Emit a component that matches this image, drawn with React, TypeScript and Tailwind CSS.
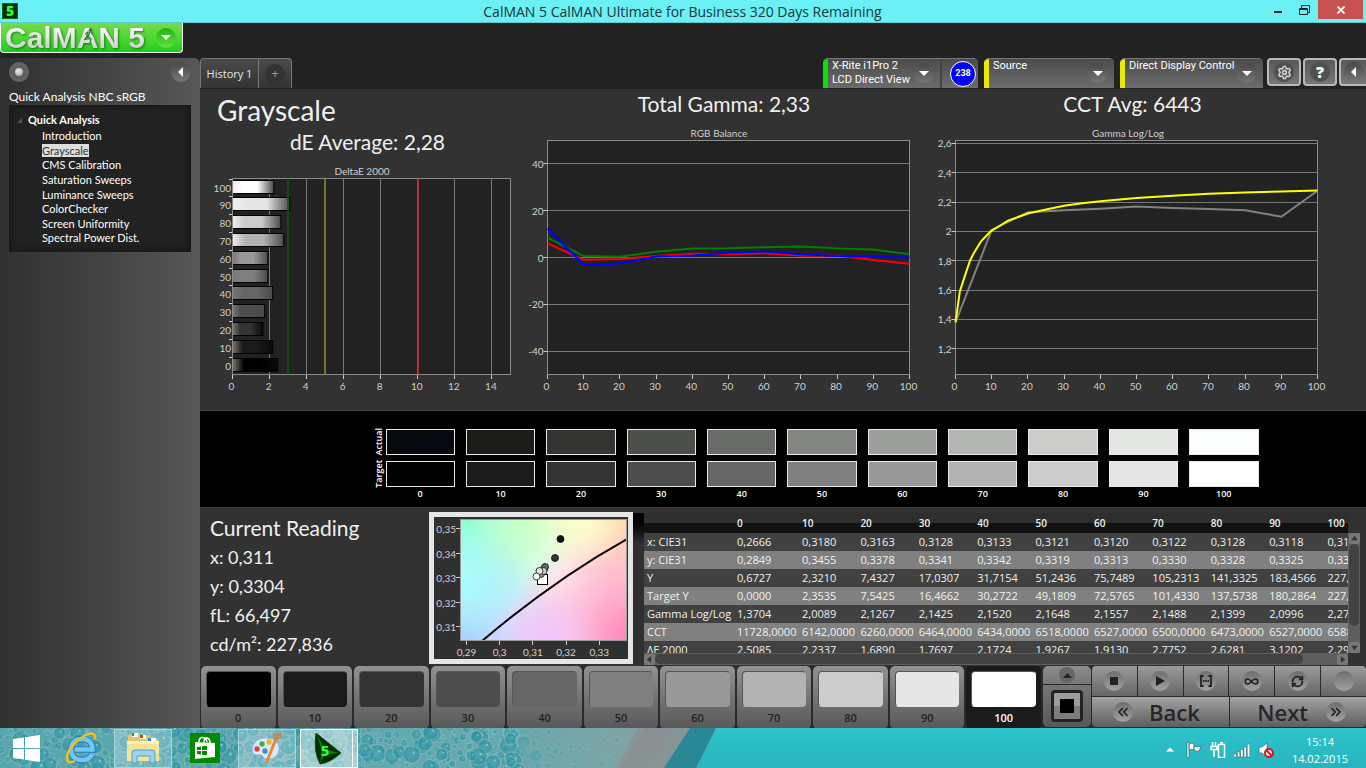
import React from 'react';
import { ChevronsLeft, ChevronsRight, Infinity as InfinityIcon, RefreshCw, Settings } from 'lucide-react';

const LEVELS = [0, 10, 20, 30, 40, 50, 60, 70, 80, 90, 100];

const TREE_ITEMS = [
  'Introduction',
  'Grayscale',
  'CMS Calibration',
  'Saturation Sweeps',
  'Luminance Sweeps',
  'ColorChecker',
  'Screen Uniformity',
  'Spectral Power Dist.',
];

const ACTUAL = ['#060a0e', '#1b1b18', '#333331', '#4d4f4b', '#6a6c69', '#838581', '#9c9e9b', '#b4b6b3', '#cdcecc', '#e4e6e3', '#fcfffe'];
const TARGET = ['#000000', '#1a1a1a', '#333333', '#4d4d4d', '#666666', '#808080', '#999999', '#b3b3b3', '#cccccc', '#e6e6e6', '#ffffff'];

const DELTA_E = [2.44, 2.17, 1.64, 1.74, 2.17, 1.91, 1.91, 2.77, 2.61, 3.09, 2.23];

const BALANCE = [
  { color: '#008000', values: [8.5, 0.6, 0.3, 2.5, 3.8, 3.9, 4.4, 4.7, 3.9, 3.4, 1.4] },
  { color: '#ff0000', values: [6, -1, -0.6, 0.6, 1.6, 1.5, 1.8, 0.9, 0.8, -1.1, -2.7] },
  { color: '#0000ff', values: [12.3, -3, -2.6, 0.4, 0.9, 2, 2.6, 1.4, 0.6, 0.2, 0] },
];

const GAMMA_ACTUAL = [1.38, 2.01, 2.13, 2.145, 2.155, 2.17, 2.16, 2.153, 2.145, 2.1, 2.277];
const GAMMA_TARGET = [
  [0, 1.38], [1.2, 1.59], [2.5, 1.69], [4, 1.8], [5, 1.85], [7, 1.93], [9.7, 2], [12, 2.035], [14.5, 2.073], [17.5, 2.1],
  [20, 2.122], [25, 2.15], [30, 2.175], [35, 2.192], [40, 2.206], [50, 2.228], [60, 2.243], [70, 2.256], [80, 2.265], [90, 2.272], [100, 2.279],
];

const ROWS = [
  ['x: CIE31', '0,2666', '0,3180', '0,3163', '0,3128', '0,3133', '0,3121', '0,3120', '0,3122', '0,3128', '0,3118', '0,3112'],
  ['y: CIE31', '0,2849', '0,3455', '0,3378', '0,3341', '0,3342', '0,3319', '0,3313', '0,3330', '0,3328', '0,3325', '0,3304'],
  ['Y', '0,6727', '2,3210', '7,4327', '17,0307', '31,7154', '51,2436', '75,7489', '105,2313', '141,3325', '183,4566', '227,8360'],
  ['Target Y', '0,0000', '2,3535', '7,5425', '16,4662', '30,2722', '49,1809', '72,5765', '101,4330', '137,5738', '180,2864', '227,8360'],
  ['Gamma Log/Log', '1,3704', '2,0089', '2,1267', '2,1425', '2,1520', '2,1648', '2,1557', '2,1488', '2,1399', '2,0996', '2,2740'],
  ['CCT', '11728,0000', '6142,0000', '6260,0000', '6464,0000', '6434,0000', '6518,0000', '6527,0000', '6500,0000', '6473,0000', '6527,0000', '6588,0000'],
  ['ΔE 2000', '2,5085', '2,2337', '1,6890', '1,7697', '2,1724', '1,9267', '1,9130', '2,7752', '2,6281', '3,1202', '2,2900'],
];

const axisText = "fill-[#d0d0d0] font-['Lato',sans-serif] text-[10px]";

const RoundArrow = ({ dir = 'down' }: { dir?: 'down' | 'left' }) => (
  <span className="flex size-5 shrink-0 items-center justify-center rounded-full bg-gradient-to-b from-[#484848] to-[#777]">
    <svg width="10" height="10" viewBox="0 0 10 10" fill="#fff" aria-hidden="true">
      {dir === 'down' ? <path d="M0 3h10L5 8z" /> : <path d="M7 0v10L2 5z" />}
    </svg>
  </span>
);

const TitleBar = () => (
  <header className="flex h-[23px] items-start border-b border-[#5cc9cd] bg-[#6bf0f5] font-['Open_Sans',sans-serif]">
    <span className="ml-[2px] mt-[3px] flex size-4 items-center justify-center border border-[#0c6b0c] bg-[#052a05] text-[14px] font-extrabold leading-4 text-[#2fff2f]">
      5
    </span>
    <h1 className="flex-1 pl-[82px] text-center text-[14px] leading-[23px] text-[#17363a]">
      CalMAN 5 CalMAN Ultimate for Business 320 Days Remaining
    </h1>
    <button type="button" aria-label="Minimize" className="flex h-5 w-[26px] items-center justify-center">
      <span className="mt-1 h-[2px] w-2 bg-[#17262a]" />
    </button>
    <button type="button" aria-label="Restore" className="flex h-5 w-[26px] items-center justify-center">
      <svg width="11" height="11" viewBox="0 0 11 11" fill="none" stroke="#17262a">
        <path d="M.5 3.5h8v6h-8zM.5 4.5h8M2.5 3V.5h8v7H9" />
      </svg>
    </button>
    <button type="button" aria-label="Close" className="ml-px mr-[3px] flex h-[19px] w-[45px] items-center justify-center bg-[#c75050]">
      <svg width="8" height="8" viewBox="0 0 8 8" stroke="#fff" strokeWidth="1.7">
        <path d="M.5.5l7 7M7.5.5l-7 7" />
      </svg>
    </button>
  </header>
);

const Logo = () => (
  <div className="h-[35px] bg-[#222]">
    <button
      type="button"
      className="relative flex h-[30px] w-[183px] items-center justify-between rounded-b-[4px] border border-t-0 border-white bg-gradient-to-b from-[#73dc4c] to-[#0bd013] pl-1 pr-[6px]"
    >
      <span className="bg-gradient-to-b from-white to-[#c9c9c9] bg-clip-text font-['Liberation_Sans',sans-serif] text-[30px] font-bold leading-[26px] text-transparent drop-shadow-[1px_1px_1px_rgba(0,60,0,0.6)]">
        CalMAN 5
      </span>
      <svg width="12" height="16" viewBox="0 0 12 16" fill="none" stroke="#2a7a2c" strokeWidth="1.2" className="absolute left-[82px] top-[5px]" aria-hidden="true">
        <circle cx="7.500" cy="2" r="1.200" fill="#2a7a2c" />
        <path d="M6.500 4.500L5 9l3 2-1 4M5 9l-4 3M2 6l3-2h3l2 3" />
      </svg>
      <span className="flex size-5 items-center justify-center rounded-full bg-gradient-to-b from-[#12b416] to-[#61e33c]">
        <svg width="10" height="6" viewBox="0 0 10 6" fill="#fff" aria-hidden="true">
          <path d="M0 0h10L5 5z" />
        </svg>
      </span>
    </button>
  </div>
);

const Sidebar = () => (
  <aside className="w-[200px] shrink-0 rounded-tr-[6px] bg-gradient-to-r from-[#303030] to-[#575757] px-[9px] font-['Lato',sans-serif] text-white">
    <div className="flex items-center justify-between pt-1">
      <button type="button" aria-label="Record" className="flex size-5 items-center justify-center rounded-full bg-[radial-gradient(circle,#555,#6e6e6e)]">
        <span className="size-2 rounded-full bg-[radial-gradient(circle_at_40%_35%,#eee,#999)]" />
      </button>
      <button type="button" aria-label="Collapse" className="rounded-full">
        <RoundArrow dir="left" />
      </button>
    </div>
    <h2 className="mt-2 pb-px text-[12px] leading-[14px]">Quick Analysis NBC sRGB</h2>
    <nav className="h-[147px] border border-[#1a1a1a] bg-[#222] pt-[6px] shadow-[inset_0_0_6px_#111]">
      <div className="flex h-[17px] items-center gap-[6px] pl-[7px] text-[11px] font-bold">
        <svg width="5" height="5" viewBox="0 0 5 5" fill="#555" aria-hidden="true">
          <path d="M5 0v5H0z" />
        </svg>
        Quick Analysis
      </div>
      <ul className="grid h-[117px] auto-rows-fr pl-8 text-[11px] leading-[13px]">
        {TREE_ITEMS.map((item) => (
          <li key={item}>
            <a href="#" className={item === 'Grayscale' ? 'bg-[#dedede] text-[#333]' : ''}>
              {item}
            </a>
          </li>
        ))}
      </ul>
    </nav>
  </aside>
);

const Meter = ({ lines, width, bar, badge }: { lines: string[]; width: string; bar: string; badge?: string }) => (
  <div className={`${width} flex h-[30px] overflow-hidden rounded-t-[5px] border-t border-[#777] bg-gradient-to-b from-[#4c4c4c] to-[#6c6c6c]`}>
    <span className={`${bar} w-[5px] shrink-0`} />
    <button type="button" className="flex flex-1 justify-between whitespace-nowrap pl-1 pr-[6px] text-left">
      <span className="relative z-10 text-[11px] leading-[14px]">
        {lines.map((line) => (
          <span key={line} className="block">
            {line}
          </span>
        ))}
      </span>
      <span className="-ml-2 mt-1">
        <RoundArrow />
      </span>
    </button>
    {badge && (
      <span className="flex items-center border-l-2 border-[#444] pl-2 pr-[2px]">
        <span className="flex size-[26px] items-center justify-center rounded-full border border-white bg-[#0000ff] text-[9px] font-bold">{badge}</span>
      </span>
    )}
  </div>
);

const squareButton = 'flex h-7 items-center justify-center border-2 border-[#b9b9b9] bg-gradient-to-b from-[#585858] to-[#777]';

const TopRow = () => (
  <div className="flex h-[31px] items-start border-b border-[#222] bg-[#222] font-['Open_Sans',sans-serif] text-white">
    <div className="flex h-[30px] rounded-t-[4px] border border-b-0 border-[#777] bg-gradient-to-b from-[#4b4b4b] to-[#333] text-[11px] text-[#e6e6e6]">
      <button type="button" className="w-[58px] border-r border-[#777] pt-px">
        History 1
      </button>
      <button type="button" aria-label="Add tab" className="flex w-8 items-center justify-center">
        <span className="flex size-5 items-center justify-center rounded-full bg-[#333] text-[13px] text-[#999]">+</span>
      </button>
    </div>
    <div className="ml-auto flex gap-[6px] font-['Roboto',sans-serif]">
      <Meter width="w-[155px]" lines={['X-Rite i1Pro 2', 'LCD Direct View']} bar="bg-[#00e600]" badge="238" />
      <Meter width="w-[130px]" lines={['Source']} bar="bg-[#eaea00]" />
      <Meter width="w-[143px]" lines={['Direct Display Control']} bar="bg-[#eaea00]" />
    </div>
    <div className="ml-1 flex gap-[2px]">
      <button type="button" aria-label="Settings" className={`${squareButton} w-[34px] rounded-[4px]`}>
        <span className="flex size-5 items-center justify-center rounded-full bg-[#505050]">
          <Settings size={15} color="#d0d0d0" strokeWidth={2.5} />
        </span>
      </button>
      <button type="button" aria-label="Help" className={`${squareButton} w-[34px] rounded-[4px]`}>
        <span className="flex size-5 items-center justify-center rounded-full bg-[#505050] text-[16px] font-extrabold leading-5">?</span>
      </button>
      <button type="button" aria-label="Collapse panel" className={`${squareButton} w-[27px] rounded-l-[4px] border-r-0`}>
        <RoundArrow dir="left" />
      </button>
    </div>
  </div>
);

const DeltaEChart = () => {
  const left = 32.5;
  const top = 23.5;
  const unit = 18.53;
  const step = 196 / 11;
  return (
    <svg viewBox="0 0 321 241" className="block w-full" role="img" aria-label="DeltaE 2000">
      <defs>
        {TARGET.map((color, i) => (
          <linearGradient key={color} id={`bar${i}`}>
            <stop offset="0" stopColor={i < 7 ? '#777' : '#eee'} />
            <stop offset="0.25" stopColor={color} />
            <stop offset="0.6" stopColor={color} />
            <stop offset="1" stopColor={i > 2 ? '#4a4a4a' : '#0a0a0a'} />
          </linearGradient>
        ))}
      </defs>
      <text x="162" y="20" textAnchor="middle" className={axisText}>DeltaE 2000</text>
      <rect x={left} y={top} width="278" height="196" fill="#222" stroke="#8a8a8a" />
      {[2, 4, 6, 8, 10, 12, 14].map((v) => (
        <path key={v} d={`M${Math.floor(left + v * unit) + 0.5} ${top}v196`} stroke="#777" />
      ))}
      {DELTA_E.map((v, i) => {
        const y = Math.floor(top + (10 - i) * step + 1.5);
        return (
          <g key={i}>
            <rect x={left} y={y + 0.5} width={v * unit} height="13" fill={`url(#bar${i})`} stroke="#000" />
            <text x="31" y={y + 12} textAnchor="end" className={axisText}>{LEVELS[i]}</text>
            <path d={`M29 ${Math.round(top + i * step) + 0.5}h3`} stroke="#ccc" />
          </g>
        );
      })}
      <path d={`M${left} ${top}v196`} stroke="#8a8a8a" />
      <path d={`M88 ${top}v196`} stroke="#0f5a0f" strokeWidth="1.5" />
      <path d={`M125 ${top}v196`} stroke="#8e8a18" strokeWidth="1.6" />
      <path d={`M218 ${top}v196`} stroke="#d22a30" strokeWidth="1.6" />
      {[0, 2, 4, 6, 8, 10, 12, 14].map((v) => (
        <g key={v}>
          <path d={`M${Math.floor(left + v * unit) + 0.5} 220v4`} stroke="#ccc" />
          <text x={left + v * unit - 1} y="235" textAnchor="middle" className={axisText}>{v}</text>
        </g>
      ))}
    </svg>
  );
};

type LineChartProps = {
  width: number;
  left: number;
  title: string;
  titleX: number;
  min: number;
  max: number;
  ticks: number[];
  children: (x: (v: number) => number, y: (v: number) => number) => React.ReactNode;
};

const LineChart = ({ width, left, title, titleX, min, max, ticks, children }: LineChartProps) => {
  const top = 21.5;
  const x = (v: number) => left + v * 3.62;
  const y = (v: number) => top + ((max - v) / (max - min)) * 234;
  return (
    <svg viewBox={`0 0 ${width} 277`} className="block w-full" role="img" aria-label={title}>
      <text x={titleX} y="18" textAnchor="middle" className={axisText}>{title}</text>
      <rect x={left} y={top} width="362" height="234" fill="#222" stroke="#8a8a8a" />
      {ticks.map((t) => (
        <g key={t}>
          <path d={`M${left} ${Math.floor(y(t)) + 0.5}h362`} stroke="#777" />
          <path d={`M${left - 4} ${Math.floor(y(t)) + 0.5}h4`} stroke="#ccc" />
          <text x={left - 4} y={y(t) + 4} textAnchor="end" className={axisText}>{String(t).replace('.', ',')}</text>
        </g>
      ))}
      {LEVELS.map((v) => (
        <g key={v}>
          <path d={`M${Math.floor(x(v)) + 0.5} 256v4`} stroke="#ccc" />
          <text x={x(v) - 1} y="271" textAnchor="middle" className={axisText}>{v}</text>
        </g>
      ))}
      {children(x, y)}
    </svg>
  );
};

const bigReading = 'text-center text-[21px] text-[#f0f0f0]';

const Charts = () => (
  <section className="grid grid-cols-[321fr_410fr_435fr] bg-[#323232] pb-[14px] font-['Lato',sans-serif]">
    <div>
      <h2 className="pl-[17px] text-[28px] leading-[42px] text-[#f0f0f0]">Grayscale</h2>
      <p className={`${bigReading} pb-[2px] pl-[14px] leading-[22px]`}>dE Average: 2,28</p>
      <DeltaEChart />
    </div>
    <div>
      <p className={`${bigReading} pr-1 leading-[30px]`}>Total Gamma: 2,33</p>
      <LineChart width={410} left={26.5} title="RGB Balance" titleX={198} min={-50} max={50} ticks={[40, 20, 0, -20, -40]}>
        {(x, y) =>
          BALANCE.map((line) => (
            <polyline
              key={line.color}
              fill="none"
              stroke={line.color}
              strokeWidth="2"
              points={line.values.map((v, i) => `${x(LEVELS[i])},${y(v)}`).join(' ')}
            />
          ))
        }
      </LineChart>
    </div>
    <div>
      <p className={`${bigReading} pr-8 leading-[30px]`}>CCT Avg: 6443</p>
      <LineChart width={435} left={24.5} title="Gamma Log/Log" titleX={197} min={1.024} max={2.62} ticks={[2.6, 2.4, 2.2, 2, 1.8, 1.6, 1.4, 1.2]}>
        {(x, y) => (
          <>
            <polyline fill="none" stroke="#828282" strokeWidth="2" points={GAMMA_ACTUAL.map((v, i) => `${x(LEVELS[i])},${y(v)}`).join(' ')} />
            <polyline fill="none" stroke="#ffff00" strokeWidth="2" points={GAMMA_TARGET.map(([a, v]) => `${x(a)},${y(v)}`).join(' ')} />
          </>
        )}
      </LineChart>
    </div>
  </section>
);

const SwatchRow = ({ label, colors }: { label: string; colors: string[] }) => (
  <>
    <span className="-mr-[18px] flex items-center justify-center">
      <span className="-rotate-90">{label}</span>
    </span>
    {colors.map((color) => (
      <span key={color} className="border border-[#e8e8e8]" style={{ backgroundColor: color }} />
    ))}
  </>
);

const Swatches = () => (
  <section className="flex h-[97px] justify-center border-t border-[#444] bg-black pt-[18px] pl-[58px] font-['Open_Sans',sans-serif] text-[9px] font-semibold text-white">
    <div className="grid w-[893px] grid-cols-[9px_repeat(11,1fr)] grid-rows-[26px_26px_13px] gap-x-[11px] gap-y-[6px]">
      <SwatchRow label="Actual" colors={ACTUAL} />
      <SwatchRow label="Target" colors={TARGET} />
      <span />
      {LEVELS.map((v) => (
        <span key={v} className="-mt-[6px] text-center leading-[13px]">
          {v}
        </span>
      ))}
    </div>
  </section>
);

const CIE_POINTS = [
  { x: 131.5, y: 27, color: '#111' },
  { x: 126, y: 46, color: '#333' },
  { x: 115, y: 57, color: '#4d4d4d' },
  { x: 116, y: 55, color: '#666' },
  { x: 112, y: 62, color: '#999' },
  { x: 114.5, y: 59, color: '#ccc' },
  { x: 110.5, y: 59, color: '#e6e6e6' },
  { x: 107.5, y: 64.5, color: '#fff' },
];

const CIE_GLOWS = [
  { id: 'g1', x: 31, y: 7, r: 120, color: '#7fffc4' },
  { id: 'g2', x: 31, y: 128, r: 110, color: '#a4c4ff' },
  { id: 'g3', x: 198, y: 7, r: 80, color: '#ffdca8' },
  { id: 'g4', x: 205, y: 128, r: 125, color: '#ff80b4' },
  { id: 'g5', x: 31, y: 68, r: 75, color: '#a8ffff' },
  { id: 'g6', x: 100, y: 7, r: 60, color: '#ccffc4' },
  { id: 'g8', x: 150, y: 7, r: 50, color: '#fbffc8' },
  { id: 'g7', x: 115, y: 132, r: 60, color: '#f0c4ff' },
];

const CieChart = () => (
  <div className="w-[204px] shrink-0 border-[5px] border-[#e6e6e6] bg-[#303030]">
    <svg viewBox="5 5 194 142" className="block w-full" role="img" aria-label="CIE chart">
      <defs>
        {CIE_GLOWS.map((g) => (
          <radialGradient key={g.id} id={g.id}>
            <stop offset="0" stopColor={g.color} />
            <stop offset="1" stopColor={g.color} stopOpacity="0" />
          </radialGradient>
        ))}
        <clipPath id="ciePlot">
          <rect x="31" y="7" width="167" height="122" />
        </clipPath>
      </defs>
      <g clipPath="url(#ciePlot)">
        <rect x="31" y="7" width="167" height="122" fill="#fffdfa" />
        {CIE_GLOWS.map((g) => (
          <circle key={g.id} cx={g.x} cy={g.y} r={g.r} fill={`url(#${g.id})`} />
        ))}
        <path d="M53 129Q126 67 198 27" fill="none" stroke="#000" strokeWidth="2" />
      </g>
      <rect x="31.5" y="7.5" width="166" height="121" fill="none" stroke="#999" />
      <rect x="108.5" y="62.5" width="10" height="10" fill="#fff" stroke="#000" />
      {CIE_POINTS.map((p) => (
        <circle key={p.color} cx={p.x} cy={p.y} r="3.5" fill={p.color} stroke="#111" strokeWidth="0.8" />
      ))}
      {[0.35, 0.34, 0.33, 0.32, 0.31].map((v, i) => (
        <g key={v}>
          <path d={`M27 ${Math.floor(16.5 + i * 24.5) + 0.5}h4`} stroke="#ccc" />
          <text x="27" y={21 + i * 24.5} textAnchor="end" className={axisText}>{String(v).replace('.', ',')}</text>
        </g>
      ))}
      {[0.29, 0.3, 0.31, 0.32, 0.33].map((v, i) => (
        <g key={v}>
          <path d={`M${Math.floor(37.5 + i * 33.2) + 0.5} 129v4`} stroke="#ccc" />
          <text x={37.5 + i * 33.2} y="144" textAnchor="middle" className={axisText}>{String(v).replace('.', ',')}</text>
        </g>
      ))}
    </svg>
  </div>
);

const Arrow = ({ d }: { d: string }) => (
  <svg width="11" height="11" viewBox="0 0 10 10" aria-hidden="true" className="shrink-0 rounded-[2px] bg-[#777]">
    <path d={d} fill="#333" />
  </svg>
);

const DataGrid = () => (
  <div className="flex min-w-0 flex-1 pt-px font-['Open_Sans',sans-serif]">
    <div className="w-[11px] shrink-0 bg-gradient-to-b from-black to-[#303030] to-20%" />
    <div className="min-w-0 flex-1">
      <div className="h-[140px] overflow-hidden">
        <table className="w-[742px] table-fixed text-left text-[11px] text-[#f0f0f0]">
          <colgroup>
            <col className="w-[93px]" />
            <col className="w-[65px]" />
          </colgroup>
          <thead>
            <tr className="h-5 bg-gradient-to-b from-[#2e2e2e] from-50% to-[#111] to-50%">
              <th scope="col" />
              {LEVELS.map((v) => (
                <th key={v} scope="col" className="p-0 text-[10px] font-semibold">
                  {v}
                </th>
              ))}
            </tr>
          </thead>
          <tbody>
            {ROWS.map(([name, ...values]) => (
              <tr key={name} className="h-[18px] bg-[#414141] leading-[18px] even:bg-[#808080]">
                <th scope="row" className="whitespace-nowrap p-0 pl-[3px] font-normal">
                  {name}
                </th>
                {values.map((v, i) => (
                  <td key={i} className="p-0">
                    {v}
                  </td>
                ))}
              </tr>
            ))}
          </tbody>
        </table>
      </div>
      <div className="flex h-3 items-center bg-[#5e5e5e]">
        <Arrow d="M6.500 2v6l-4-3z" />
        <span className="h-[10px] w-[92%] rounded-full bg-[#424242]" />
        <span className="ml-auto flex">
          <Arrow d="M3.500 2v6l4-3z" />
        </span>
      </div>
    </div>
    <div className="mb-[13px] mr-[6px] mt-5 flex w-3 shrink-0 flex-col items-center bg-[#5e5e5e]">
      <Arrow d="M2 6.500h6l-3-4z" />
      <span className="h-[82px] w-[10px] rounded-full bg-[#424242]" />
      <span className="mt-auto flex">
        <Arrow d="M2 3.500h6l-3 4z" />
      </span>
    </div>
  </div>
);

const Readings = () => (
  <section className="flex h-[159px] border-t border-[#3c3c3c] bg-[#323232] pt-1">
    <div className="min-w-[229px] pl-[10px] font-['Lato',sans-serif] text-[18px] leading-[29px] text-[#f0f0f0]">
      <h2 className="text-[21px] leading-[31px]">Current Reading</h2>
      <p>x: 0,311</p>
      <p>y: 0,3304</p>
      <p>fL: 66,497</p>
      <p>cd/m²: 227,836</p>
    </div>
    <div className="pb-[1px]">
      <CieChart />
    </div>
    <DataGrid />
  </section>
);

const iconButton = 'flex flex-1 items-center justify-center bg-gradient-to-b from-[#9b9b9b] to-[#666]';
const iconDisc = 'flex size-5 items-center justify-center rounded-full bg-gradient-to-b from-[#6e6e6e] to-[#a2a2a2] text-[#222]';
const navButton = 'flex flex-1 items-center bg-gradient-to-b from-[#a4a4a4] to-[#5e5e5e] text-[22px] font-semibold leading-[30px] text-[#262626]';

const Controls = () => (
  <section className="flex h-[62px] bg-[#2a2a2a] pb-px font-['Open_Sans',sans-serif]">
    <div className="grid flex-1 grid-cols-11 gap-[2px] pl-px">
      {LEVELS.map((v, i) => (
        <button
          key={v}
          type="button"
          className={`flex flex-col rounded-[5px] px-[5px] pt-[5px] text-[11px] font-semibold leading-[22px] ${
            v === 100 ? 'bg-[#1b1b1b] text-white' : 'bg-gradient-to-b from-[#929292] to-[#585858] text-[#222]'
          }`}
        >
          <span className="h-9 w-full rounded-[4px] border border-t-[#555] border-l-[#555] border-r-transparent border-b-transparent" style={{ backgroundColor: TARGET[i] }} />
          <span className="w-full text-center">{v}</span>
        </button>
      ))}
    </div>
    <div className="ml-[2px] flex w-12 flex-col gap-px">
      <button type="button" aria-label="Expand" className="flex h-[18px] items-center justify-center rounded-t-[5px] bg-gradient-to-b from-[#8c8c8c] to-[#777]">
        <span className="flex size-4 items-center justify-center rounded-full bg-[#666]">
          <svg width="9" height="5" viewBox="0 0 9 5" fill="#222" aria-hidden="true">
            <path d="M0 5h9L4.500 0z" />
          </svg>
        </span>
      </button>
      <div className="flex flex-1 items-center justify-center rounded-b-[5px] bg-gradient-to-b from-[#757575] to-[#585858]">
        <button type="button" aria-label="Stop" className="flex size-8 items-center justify-center rounded-[4px] border-[3px] border-[#222] bg-gradient-to-b from-[#9c9c9c] from-50% to-[#7d7d7d] to-50%">
          <span className="size-[14px] bg-black" />
        </button>
      </div>
    </div>
    <div className="ml-px flex w-[274px] flex-col gap-px">
      <div className="flex h-[30px] gap-px overflow-hidden rounded-t-[4px]">
        <button type="button" aria-label="Stop reading" className={iconButton}>
          <span className={iconDisc}><span className="size-2 bg-[#222]" /></span>
        </button>
        <button type="button" aria-label="Play" className={iconButton}>
          <span className={iconDisc}>
            <svg width="10" height="10" viewBox="0 0 10 10" fill="#222"><path d="M1 0l9 5-9 5z" /></svg>
          </span>
        </button>
        <button type="button" aria-label="Read series" className={iconButton}>
          <span className={iconDisc}>
            <svg width="12" height="12" viewBox="0 0 12 12" fill="none" stroke="#222" strokeWidth="1.8">
              <path d="M3.500 1H1v10h2.500M8.500 1H11v10H8.500" />
              <path d="M3 6h1.500M5.300 6h1.500M7.600 6h1.500" />
            </svg>
          </span>
        </button>
        <button type="button" aria-label="Read continuously" className={iconButton}>
          <span className={iconDisc}><InfinityIcon size={15} strokeWidth={2.5} /></span>
        </button>
        <button type="button" aria-label="Refresh" className={iconButton}>
          <span className={iconDisc}><RefreshCw size={13} strokeWidth={3.5} /></span>
        </button>
        <button type="button" aria-label="Empty" className={iconButton}>
          <span className={iconDisc} />
        </button>
      </div>
      <div className="flex h-[30px] gap-px overflow-hidden rounded-b-[4px]">
        <button type="button" className={`${navButton} gap-4 pl-[21px]`}>
          <span className={iconDisc}><ChevronsLeft size={16} strokeWidth={2.5} /></span>
          Back
        </button>
        <button type="button" className={`${navButton} justify-end gap-[18px] pr-5`}>
          Next
          <span className={iconDisc}><ChevronsRight size={16} strokeWidth={2.5} /></span>
        </button>
      </div>
    </div>
  </section>
);

// Pseudo-random bubbles for the wallpaper showing through the taskbar
const noise = (n: number) => {
  const v = Math.sin(n * 12.9898) * 43758.5453;
  return v - Math.floor(v);
};

const BUBBLES = Array.from({ length: 700 }, (_, i) => ({
  x: noise(i + 1) * 620,
  y: noise(i + 1500) * 42,
  r: i < 560 ? 1 + noise(i + 2900) * 3 : 5 + noise(i + 2900) * 4,
})).filter((b) => b.x < 540 || b.r < 3);

const Wallpaper = () => (
  <svg className="absolute left-0 top-0 h-10 w-[720px]" viewBox="0 0 720 40" aria-hidden="true">
    <defs>
      <linearGradient id="foam">
        <stop offset="0" stopColor="#57a6ae" />
        <stop offset="0.7" stopColor="#66a8ae" />
        <stop offset="0.86" stopColor="#7ea5a6" />
        <stop offset="1" stopColor="#7d9a9c" />
      </linearGradient>
      <radialGradient id="bubble">
        <stop offset="0" stopColor="#3aa3b1" />
        <stop offset="1" stopColor="#268b9b" />
      </radialGradient>
    </defs>
    <path d="M0 0H716L696 40H0z" fill="url(#foam)" />
    {BUBBLES.map((b, i) => (
      <g key={i} opacity={b.x > 520 ? 0.25 : 0.55}>
        <circle cx={b.x} cy={b.y} r={b.r} fill="url(#bubble)" stroke="#86b9bd" strokeWidth="1.2" />
        <circle cx={b.x + b.r / 4} cy={b.y - b.r / 4} r={b.r / 7} fill="#a9dde0" />
      </g>
    ))}
    <path d="M642 0L618 40h46L690 0z" fill="#869496" />
    <path d="M640 0l-24 40M648 0l-24 40M656 0l-24 40M666 0l-24 40" stroke="#9c8584" strokeWidth="2" opacity="0.6" />
    <path d="M690 0L664 40h32L716 0z" fill="#2a8795" />
  </svg>
);

const taskCell = 'flex h-[39px] w-[58px] items-center justify-center';

const Taskbar = () => (
  <footer className="relative flex h-10 items-center bg-gradient-to-b from-[#2cc3cb] to-[#29b4bf] font-['Open_Sans',sans-serif] text-white">
    <Wallpaper />
    <div className="relative flex items-center">
      <button type="button" aria-label="Start" className="flex w-[52px] justify-center">
        <svg width="27" height="27" viewBox="0 0 27 27" fill="#fff">
          <path d="M0 4l11-1.600V13H0zM12 2.200L27 0v13H12zM0 14h11v10.600L0 23zM12 14h15v13l-15-2.200z" />
        </svg>
      </button>
      <button type="button" aria-label="Internet Explorer" className={taskCell}>
        <svg width="34" height="34" viewBox="0 0 34 34" fill="none">
          <path d="M28 23.500C26 28 22 29 18 29C11 29 7 25 7 18.500S11 8 18 8c7 0 10.500 4 10.500 10.500H11" stroke="#2a78c0" strokeWidth="6.500" />
          <path d="M28 23.500C26 28 22 29 18 29C11 29 7 25 7 18.500S11 8 18 8c7 0 10.500 4 10.500 10.500H11" stroke="#6cc8f4" strokeWidth="4.500" />
          <path d="M31 8C32 2 27 1 20 5C11 10 3 20 3 27c0 5 4 5 8 3" stroke="#f2bf1c" strokeWidth="2.500" />
        </svg>
      </button>
      <button type="button" aria-label="File Explorer" className={`${taskCell} ml-1 border border-[#a5d8dc] bg-white/25`}>
        <svg width="34" height="32" viewBox="0 0 34 32">
          <path d="M2 5l2-3h9l2 2h9l1 3h7v20H2z" fill="#e6c668" />
          <path d="M6 1h6v4H6z" fill="#fff" /><path d="M6 1h2v3H6z" fill="#1c9a36" />
          <path d="M14 3h6v4h-6z" fill="#fff" /><path d="M14 3h3v3h-3z" fill="#d03c26" />
          <path d="M22 6h8v3h-8z" fill="#fff" /><path d="M22 6h3v3h-3z" fill="#288fd6" />
          <path d="M1 9h32v20H1z" fill="#f6e39b" />
          <path d="M1 9h32v3H1z" fill="#fbf0bf" />
          <path d="M6 31V21q0-3 3-3h17q3 0 3 3v10h-5v-7H11v7z" fill="#9bd2ee" stroke="#599fc5" />
        </svg>
      </button>
      <button type="button" aria-label="Store" className="flex w-[66px] justify-center">
        <svg width="30" height="30" viewBox="0 0 30 30">
          <path d="M0 0h30v30H0z" fill="#008a00" />
          <path d="M5 9l20 1v14L5 26z" fill="#fff" />
          <path d="M9 9c0-6 7-6 8 0M14 9c0-6 6-5 6 1" fill="none" stroke="#fff" strokeWidth="1.500" />
          <path d="M7 14l4-.5V17H7zM12 13.300l5-.6V17h-5zM7 18h4v3.500L7 21zM12 18h5v4.300l-5-.6z" fill="#008a00" />
        </svg>
      </button>
      <button type="button" aria-label="Paint" className={`${taskCell} border border-[#a5d8dc] bg-white/25`}>
        <svg width="34" height="34" viewBox="0 0 34 34">
          <path d="M2 19C3 10 10 6 18 7c8 1 12 6 11 12c-1 7-7 10-13 9c-3 0-3-4-5-4c-3 0-9 1-9-5z" fill="#d8eafa" stroke="#7fb2de" />
          <circle cx="7" cy="18" r="2.700" fill="#dd4038" />
          <circle cx="12" cy="13" r="2.700" fill="#4cab3c" />
          <circle cx="19" cy="11" r="2.700" fill="#f1b51e" />
          <circle cx="15" cy="20" r="2.700" fill="#438fb6" />
          <path d="M28 7L18 31l-2 1v-3L25 6z" fill="#ee862c" />
          <path d="M23 2l4 1 4-2 1 5-5 3-4-2z" fill="#b98d61" />
        </svg>
      </button>
      <button type="button" aria-label="CalMAN" className="ml-1 flex h-[39px] w-[58px] items-center border border-white bg-white/45">
        <span className="flex h-full flex-1 items-center justify-center border-r border-white">
          <svg width="30" height="34" viewBox="0 0 30 34">
            <path d="M4 2L29 22Q18 32 8 33Q1 20 4 2z" fill="#032b03" stroke="#0a5c0a" />
            <path d="M5 4l8 14 14 4-14 2-5 8 2-11z" fill="#0a7d0a" />
            <text x="13" y="25" textAnchor="middle" fill="#39ff39" className="font-['Open_Sans',sans-serif] text-[15px] font-bold">5</text>
          </svg>
        </span>
        <span className="w-1" />
      </button>
    </div>
    <div className="relative ml-auto flex items-center gap-2 pt-[3px]">
      <svg width="8" height="5" viewBox="0 0 8 5" fill="#fff" className="mr-1"><path d="M0 4.500h8L4 .5z" /></svg>
      <svg width="16" height="16" viewBox="0 0 16 16" fill="#fff" stroke="#1a5e63" strokeWidth="0.6">
        <path d="M1 .5h2v15H1zM3 2q3-1.500 5 0v6q-2-1.500-5 0zM8 4q3 2 7 0q-1 3-2 5q-3 1-5-1z" />
      </svg>
      <svg width="16" height="16" viewBox="0 0 16 16" fill="none" stroke="#fff" strokeWidth="1.500">
        <path d="M8.500 2.500h6v13h-6zM10 .8h3M2.500 0v4M5.500 0v4M1 4.500h6v3H1zM4 8v7" />
      </svg>
      <svg width="16" height="16" viewBox="0 0 16 16" fill="#fff" stroke="#1a5e63" strokeWidth="0.500">
        <path d="M0 12h2.500v3H0zM3.300 10h2.500v5H3.300zM6.600 7.500h2.500V15H6.600zM10 5h2.500v10H10zM13.300 2h2.500v13h-2.500z" />
      </svg>
      <svg width="16" height="16" viewBox="0 0 16 16">
        <path d="M1 5h3l5-4v14l-5-4H1z" fill="#fff" stroke="#1a5e63" strokeWidth="0.600" />
        <circle cx="11" cy="11" r="4" fill="#fff" stroke="#d8151c" strokeWidth="2" />
        <path d="M8 8l6 6" stroke="#d8151c" strokeWidth="2" />
      </svg>
      <div className="ml-[10px] mr-[18px] text-center text-[11px] leading-[17px]">
        <p>15:14</p>
        <p>14.02.2015</p>
      </div>
    </div>
  </footer>
);

const App = () => {
  return (
    <div className="flex min-h-screen flex-col overflow-hidden bg-[#222]">
      <TitleBar />
      <Logo />
      <div className="flex flex-1">
        <Sidebar />
        <main className="min-w-0 flex-1">
          <TopRow />
          <Charts />
          <Swatches />
          <Readings />
          <Controls />
        </main>
      </div>
      <Taskbar />
    </div>
  );
};

export default App;
